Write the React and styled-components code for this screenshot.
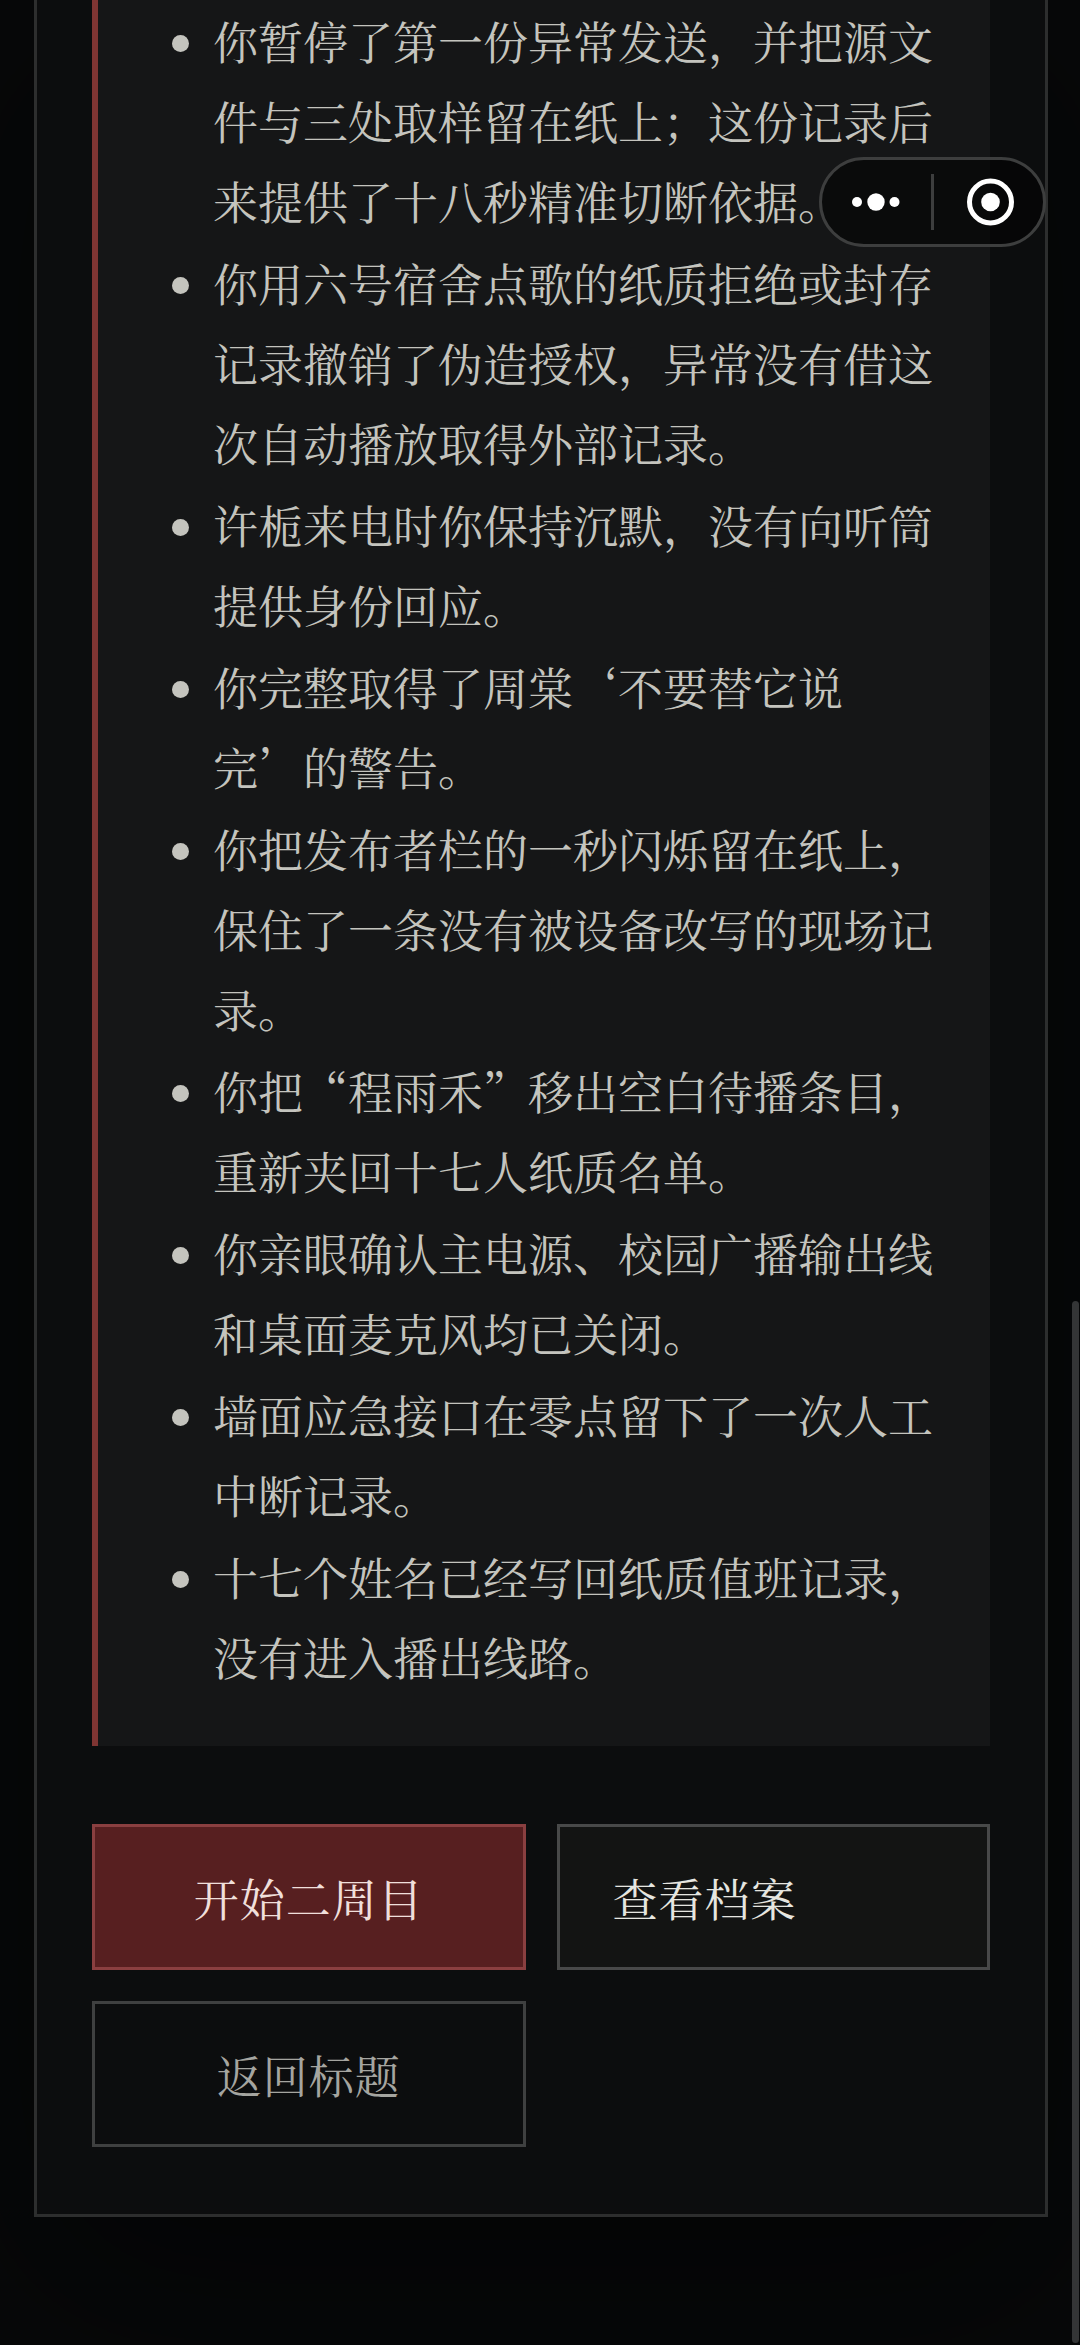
import styled, { createGlobalStyle } from "styled-components";

const records = [
    "你暂停了第一份异常发送，并把源文件与三处取样留在纸上；这份记录后来提供了十八秒精准切断依据。",
    "你用六号宿舍点歌的纸质拒绝或封存记录撤销了伪造授权，异常没有借这次自动播放取得外部记录。",
    "许栀来电时你保持沉默，没有向听筒提供身份回应。",
    "你完整取得了周棠‘不要替它说完’的警告。",
    "你把发布者栏的一秒闪烁留在纸上，保住了一条没有被设备改写的现场记录。",
    "你把“程雨禾”移出空白待播条目，重新夹回十七人纸质名单。",
    "你亲眼确认主电源、校园广播输出线和桌面麦克风均已关闭。",
    "墙面应急接口在零点留下了一次人工中断记录。",
    "十七个姓名已经写回纸质值班记录，没有进入播出线路。",
];

const App = () => {
    return (
        <Page lang="zh-CN">
            <GlobalStyle />

            <Card>
                <Report>
                    <RecordList>
                        {records.map((text) => (
                            <Record key={text}>{text}</Record>
                        ))}
                    </RecordList>
                </Report>

                <Actions>
                    <ActionButton $variant="primary">开始二周目</ActionButton>
                    <ActionButton $variant="archive">查看档案</ActionButton>
                    <ActionButton $variant="ghost">返回标题</ActionButton>
                </Actions>
            </Card>

            <Capsule>
                <CapsuleButton aria-label="更多">
                    <svg width="50" height="50" viewBox="0 0 50 50" fill="#fff">
                        <circle cx="5" cy="25" r="5" />
                        <circle cx="24" cy="25" r="8.7" />
                        <circle cx="42.5" cy="25" r="5" />
                    </svg>
                </CapsuleButton>
                <Divider />
                <CapsuleButton aria-label="关闭">
                    <svg width="50" height="50" viewBox="0 0 50 50" fill="none">
                        <circle cx="26.5" cy="25" r="21" stroke="#fff" strokeWidth="5" />
                        <circle cx="26.5" cy="25" r="9.3" fill="#fff" />
                    </svg>
                </CapsuleButton>
            </Capsule>

            <ScrollThumb />
        </Page>
    );
}

const GlobalStyle = createGlobalStyle`
    * {
        box-sizing: border-box;
    }

    body {
        margin: 0;
        background: #070809;
    }
`

const Page = styled.main`
    position: relative;
    overflow: hidden;
    padding: 0 32px 128px 34px;
    font-family: "Noto Serif CJK SC", "Noto Sans CJK SC", serif;
    font-size: 45px;
    font-weight: 400;
    color: #c4c4be;
`

const Card = styled.section`
    padding: 0 55px 67px 55px;
    border: 3px solid #2d2e2e;
    border-top: none;
    background: #0c0d0e;
    box-shadow: 0 68px 200px rgba(0, 0, 0, 0.5);
`

const Report = styled.div`
    padding: 1px 54px 49px 51px;
    border-left: 6px solid #7f3533;
    background: #151617;
`

const RecordList = styled.ul`
    display: flex;
    flex-direction: column;
    gap: 2px;
    margin: 0;
    padding-left: 64px;
`

const Record = styled.li`
    line-height: 80px;
`

const Actions = styled.div`
    display: grid;
    grid-template-columns: 1fr 1fr;
    gap: 31px;
    margin-top: 78px;
`

const variants = {
    primary: `
        border-color: #8a3f40;
        background: #571f20;
        color: #f0dfdb;
    `,
    archive: `
        border-color: #484949;
        background: #131413;
        color: #e6e6e0;
        text-align: left;
    `,
    ghost: `
        border-color: #3f4040;
        background: transparent;
        color: #a5a5a0;
    `,
};

const ActionButton = styled.button`
    height: 146px;
    padding: 0 53px;
    border: 3px solid;
    font: inherit;
    letter-spacing: 1px;
    cursor: pointer;
    ${({ $variant }) => variants[$variant]}
`

const Capsule = styled.div`
    position: absolute;
    top: 157px;
    right: 34px;
    display: flex;
    align-items: center;
    width: 227px;
    height: 90px;
    border: 3px solid #3d3e3e;
    border-radius: 45px;
    background: rgba(0, 0, 0, 0.5);
`

const CapsuleButton = styled.button`
    display: flex;
    flex: 1;
    align-items: center;
    justify-content: center;
    height: 100%;
    padding: 0;
    border: none;
    background: none;
    cursor: pointer;
`

const Divider = styled.span`
    width: 3px;
    height: 56px;
    background: #3d3e3e;
`

const ScrollThumb = styled.div`
    position: absolute;
    top: 1301px;
    right: 1px;
    bottom: 2px;
    width: 7px;
    border-radius: 4px;
    background: #343536;
`

export default App;
